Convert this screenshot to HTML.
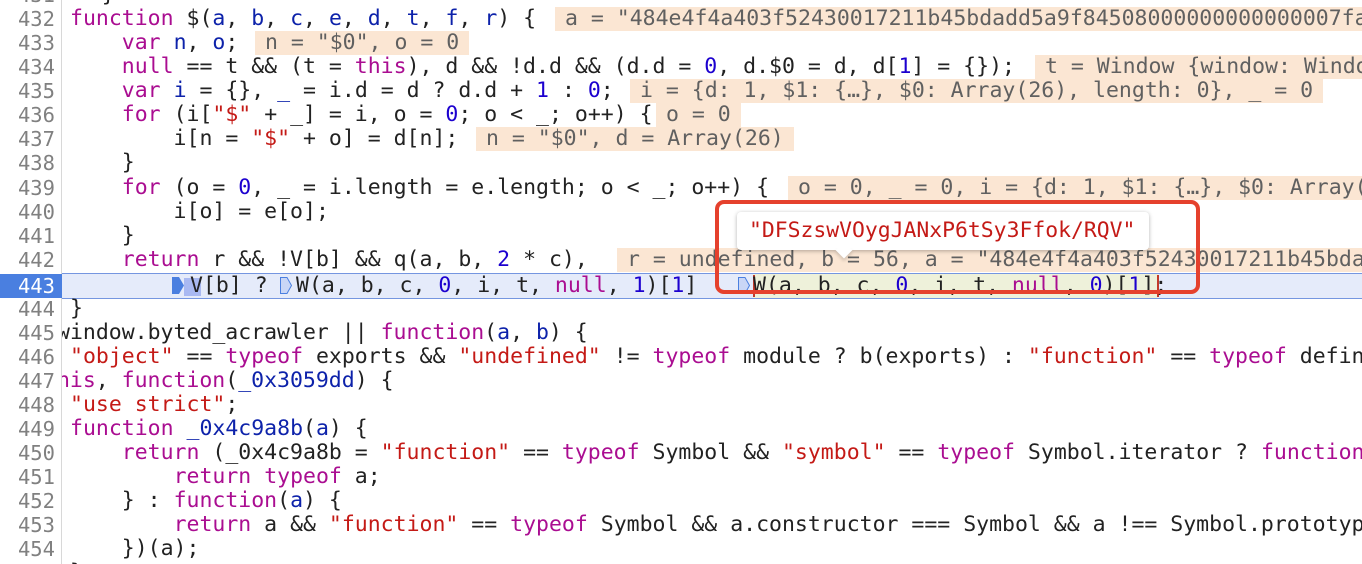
<!DOCTYPE html>
<html><head><meta charset="utf-8"><style>
html,body{margin:0;padding:0;background:#fff;width:1362px;height:564px;overflow:hidden;position:relative;
font-family:"DejaVu Sans Mono","Liberation Mono",monospace;font-size:21.5px;color:#222}
.ln{position:absolute;left:0;width:55px;text-align:right;color:#808080;height:24px;line-height:24px;font-family:"DejaVu Sans Mono",monospace;font-size:20.5px}
.gut{position:absolute;left:61px;top:0;width:1px;height:564px;background:#d8d8d8}
.c{position:absolute;white-space:pre;height:24px;line-height:24px}
.clip{position:absolute;left:62px;top:0;right:0;bottom:0;overflow:hidden}
.k{color:#aa0d91}.s{color:#c41a16}.n{color:#1c00cf}.v{color:#0d22aa}
.iv{position:absolute;height:24px;line-height:24px;background:#fbe6d3;color:#606060;white-space:pre;padding:0 10px}
.mk{position:absolute;width:12px;height:17px}
</style></head><body>
<div class="gut"></div>
<div class="ln" style="top:-17px">431</div>
<div class="ln" style="top:7px">432</div>
<div class="ln" style="top:31px">433</div>
<div class="ln" style="top:55px">434</div>
<div class="ln" style="top:79px">435</div>
<div class="ln" style="top:103px">436</div>
<div class="ln" style="top:127px">437</div>
<div class="ln" style="top:151px">438</div>
<div class="ln" style="top:176px">439</div>
<div class="ln" style="top:200px">440</div>
<div class="ln" style="top:224px">441</div>
<div class="ln" style="top:248px">442</div>
<svg style="position:absolute;left:0;top:274px" width="70" height="24"><path d="M0 0H62L68 12L62 24H0Z" fill="#4a7fe0"/></svg>
<div class="ln" style="top:274px;color:#fff">443</div>
<div class="ln" style="top:297px">444</div>
<div class="ln" style="top:321px">445</div>
<div class="ln" style="top:345px">446</div>
<div class="ln" style="top:369px">447</div>
<div class="ln" style="top:393px">448</div>
<div class="ln" style="top:417px">449</div>
<div class="ln" style="top:441px">450</div>
<div class="ln" style="top:465px">451</div>
<div class="ln" style="top:489px">452</div>
<div class="ln" style="top:513px">453</div>
<div class="ln" style="top:537px">454</div>
<div class="ln" style="top:561px">455</div>

<div class="clip">
<div style="position:absolute;left:0;right:0;top:273px;height:24px;background:#e5ebfa;border-top:1px solid #7596e0;border-bottom:1px solid #7596e0"></div>
<div style="position:absolute;left:691px;top:274px;width:405px;height:24px;background:#eef1da"></div>
<div style="position:absolute;left:122px;top:278px;width:17px;height:18px;background:#a9b9f2"></div>
<div style="position:absolute;left:691px;top:275px;width:2px;height:22px;background:#c23a2a"></div>
<div style="position:absolute;left:1095px;top:275px;width:2px;height:22px;background:#c23a2a"></div>

<div class="iv" style="left:493px;top:7px">a = "484e4f4a403f52430017211b45bdadd5a9f84508000000000000007fa1c2e3"</div>
<div class="iv" style="left:193px;top:31px">n = "$0", o = 0</div>
<div class="iv" style="left:973px;top:55px">t = Window {window: Window, self: Window}</div>
<div class="iv" style="left:568px;top:79px">i = {d: 1, $1: {…}, $0: Array(26), length: 0}, _ = 0</div>
<div class="iv" style="left:594px;top:103px">o = 0</div>
<div class="iv" style="left:414px;top:127px">n = "$0", d = Array(26)</div>
<div class="iv" style="left:726px;top:176px">o = 0, _ = 0, i = {d: 1, $1: {…}, $0: Array(26)}</div>
<div class="iv" style="left:555px;top:248px">r = undefined, b = 56, a = "484e4f4a403f52430017211b45bdadd5"</div>

<div class="c" style="left:-12px;top:-17px">    }</div>
<div class="c" style="left:8px;top:7px"><span class="k">function</span> $(<span class="v">a</span>, <span class="v">b</span>, <span class="v">c</span>, <span class="v">e</span>, <span class="v">d</span>, <span class="v">t</span>, <span class="v">f</span>, <span class="v">r</span>) {</div>
<div class="c" style="left:8px;top:31px">    <span class="k">var</span> <span class="v">n</span>, <span class="v">o</span>;</div>
<div class="c" style="left:8px;top:55px">    <span class="k">null</span> == t &amp;&amp; (t = <span class="k">this</span>), d &amp;&amp; !d.d &amp;&amp; (d.d = <span class="n">0</span>, d.$0 = d, d[<span class="n">1</span>] = {});</div>
<div class="c" style="left:8px;top:79px">    <span class="k">var</span> <span class="v">i</span> = {}, <span class="v">_</span> = i.d = d ? d.d + <span class="n">1</span> : <span class="n">0</span>;</div>
<div class="c" style="left:8px;top:103px">    <span class="k">for</span> (i[<span class="s">"$"</span> + _] = i, o = <span class="n">0</span>; o &lt; _; o++) {</div>
<div class="c" style="left:8px;top:127px">        i[n = <span class="s">"$"</span> + o] = d[n];</div>
<div class="c" style="left:8px;top:151px">    }</div>
<div class="c" style="left:8px;top:176px">    <span class="k">for</span> (o = <span class="n">0</span>, _ = i.length = e.length; o &lt; _; o++) {</div>
<div class="c" style="left:8px;top:200px">        i[o] = e[o];</div>
<div class="c" style="left:8px;top:224px">    }</div>
<div class="c" style="left:8px;top:248px">    <span class="k">return</span> r &amp;&amp; !V[b] &amp;&amp; q(a, b, <span class="n">2</span> * c),</div>

<svg class="mk" style="left:110px;top:277px" viewBox="0 0 12 17"><path d="M0 0H7L12 8.5L7 17H0Z" fill="#4a7fe0"/></svg>
<div class="c" style="left:128px;top:274px">V[b] ?</div>
<svg class="mk" style="left:218px;top:277px" viewBox="0 0 12 17"><path d="M0.5 0.5H7L11.5 8.5L7 16.5H0.5Z" fill="#c9d6f6" stroke="#4a7fe0"/></svg>
<div class="c" style="left:234px;top:274px">W(a, b, c, <span class="n">0</span>, i, t, <span class="k">null</span>, <span class="n">1</span>)[<span class="n">1</span>]</div>
<svg class="mk" style="left:676px;top:277px" viewBox="0 0 12 17"><path d="M0.5 0.5H7L11.5 8.5L7 16.5H0.5Z" fill="#c9d6f6" stroke="#4a7fe0"/></svg>
<div class="c" style="left:691px;top:274px">W(a, b, c, <span class="n">0</span>, i, t, <span class="k">null</span>, <span class="n">0</span>)[<span class="n">1</span>];</div>

<div class="c" style="left:8px;top:297px">}</div>
<div class="c" style="left:-5px;top:321px">window.byted_acrawler || <span class="k">function</span>(<span class="v">a</span>, <span class="v">b</span>) {</div>
<div class="c" style="left:8px;top:345px"><span class="s">"object"</span> == <span class="k">typeof</span> exports &amp;&amp; <span class="s">"undefined"</span> != <span class="k">typeof</span> module ? b(exports) : <span class="s">"function"</span> == <span class="k">typeof</span> define</div>
<div class="c" style="left:-18px;top:369px"><span class="k">this</span>, <span class="k">function</span>(<span class="v">_0x3059dd</span>) {</div>
<div class="c" style="left:8px;top:393px"><span class="s">"use strict"</span>;</div>
<div class="c" style="left:8px;top:417px"><span class="k">function</span> <span class="v">_0x4c9a8b</span>(<span class="v">a</span>) {</div>
<div class="c" style="left:8px;top:441px">    <span class="k">return</span> (_0x4c9a8b = <span class="s">"function"</span> == <span class="k">typeof</span> Symbol &amp;&amp; <span class="s">"symbol"</span> == <span class="k">typeof</span> Symbol.iterator ? <span class="k">function</span>(a)</div>
<div class="c" style="left:8px;top:465px">        <span class="k">return</span> <span class="k">typeof</span> a;</div>
<div class="c" style="left:8px;top:489px">    } : <span class="k">function</span>(<span class="v">a</span>) {</div>
<div class="c" style="left:8px;top:513px">        <span class="k">return</span> a &amp;&amp; <span class="s">"function"</span> == <span class="k">typeof</span> Symbol &amp;&amp; a.constructor === Symbol &amp;&amp; a !== Symbol.prototype</div>
<div class="c" style="left:8px;top:537px">    })(a);</div>
<div class="c" style="left:8px;top:561px">}</div>
</div>

<div style="position:absolute;left:737px;top:212px;width:412px;height:38px;background:#fff;border-radius:4px;box-shadow:0 1px 4px rgba(0,0,0,0.3);"></div>
<div style="position:absolute;left:838px;top:244px;width:12px;height:12px;background:#fff;transform:rotate(45deg);box-shadow:2px 2px 3px rgba(0,0,0,0.15)"></div>
<div style="position:absolute;left:832px;top:238px;width:26px;height:10px;background:#fff"></div>
<div style="position:absolute;left:749px;top:219px;height:24px;line-height:24px;white-space:pre;color:#c41a16;font-size:21.4px">"DFSzswVOygJANxP6tSy3Ffok/RQV"</div>

<div style="position:absolute;left:715px;top:200px;width:477px;height:86px;border:4px solid #e5412d;border-radius:9px"></div>
</body></html>
